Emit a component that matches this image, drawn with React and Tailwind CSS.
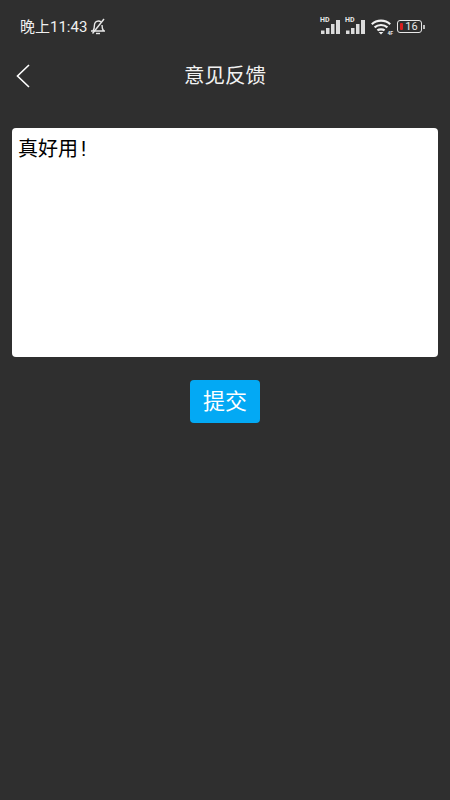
import React from 'react';

function HdSignal() {
  return (
    <div className="relative w-[21px] h-[17px]">
      <span className="absolute left-0 top-[-2px] text-[7px] leading-[8px] font-bold text-[#e8e8e8]">HD</span>
      <svg width="21" height="17" viewBox="0 0 21 17" className="absolute left-0 top-0">
        <rect x="1" y="12.5" width="3.5" height="3.5" fill="#dcdcdc" />
        <rect x="6" y="10" width="3.5" height="6" fill="#dcdcdc" />
        <rect x="11" y="6" width="3.5" height="10" fill="#dcdcdc" />
        <rect x="16" y="2" width="4" height="14" fill="#dcdcdc" />
      </svg>
    </div>
  );
}

function StatusBar() {
  return (
    <div className="h-[52px] flex items-center justify-between pl-[20px] pr-[25px] pt-[1px] text-[#e8e8e8]">
      <div className="flex items-center">
        <span className="text-[15px] leading-[20px] text-[#f0f0f0]">晚上11:43</span>
        <svg width="16" height="17" viewBox="0 0 16 17" fill="none" stroke="#e8e8e8" strokeWidth="1.4" className="ml-[3px]">
          <path d="M1 13h14M3 13c1.2-1.6 1.4-3.2 1.4-5.4C4.4 5 6 3 8.4 3c1 0 1.9.3 2.6 1M12 7c0 2.6.3 4.4 1.6 6" />
          <path d="M2.5 15.5 14 1" />
          <path d="M6 15.5h4" />
        </svg>
      </div>
      <div className="flex items-center">
        <HdSignal />
        <div className="ml-[4px]">
          <HdSignal />
        </div>
        <div className="relative ml-[5px] w-[20px] h-[16px]">
          <svg width="20" height="16" viewBox="0 0 20 16" fill="none" stroke="#f0f0f0" strokeWidth="2.2">
            <path d="M.8 5.2c5-4.8 13.4-4.8 18.4 0" />
            <path d="M3.6 8.4c3.4-3.2 9.4-3.2 12.8 0" />
            <path d="M6.4 11.4c1.8-1.5 5.4-1.5 7.2 0" />
            <path d="M7.6 13 10 15.6 12.4 13z" fill="#f0f0f0" stroke="none" />
          </svg>
          <span className="absolute right-[-2px] bottom-[-1px] text-[5px] leading-[6px] font-bold">4F</span>
        </div>
        <div className="ml-[6px] flex items-center">
          <div className="relative w-[25px] h-[13px] rounded-[3px] border border-[#e8e8e8] flex items-center justify-center">
            <div className="absolute left-[2px] top-[2px] bottom-[2px] w-[3px] bg-[#d81e1e] rounded-[1px]" />
            <span className="text-[11px] leading-none pl-[4px]">16</span>
          </div>
          <div className="w-[2px] h-[4px] bg-[#bdbdbd] ml-[1px]" />
        </div>
      </div>
    </div>
  );
}

function App() {
  return (
    <div
      className="w-[450px] h-[800px] bg-[#2f2f2f] flex flex-col overflow-hidden"
      style={{ fontFamily: '"Roboto", "Noto Sans CJK SC", sans-serif' }}
    >
      <StatusBar />

      {/* 标题栏 */}
      <div className="relative h-[48px] flex items-center justify-center">
        <svg width="16" height="26" viewBox="0 0 16 26" fill="none" stroke="white" strokeWidth="1.6" className="absolute left-[15px] top-[11px]">
          <path d="M14 2 2.5 13 14 24" />
        </svg>
        <h1 className="text-[20.5px] text-[#f2f2f2] font-normal">意见反馈</h1>
      </div>

      <div className="flex flex-col items-center px-[12px] pt-[28px]">
        <div className="w-full h-[229px] bg-white rounded-[4px] px-[6px] py-[6px] text-[20px] leading-[30px] text-black">
          真好用<span className="ml-[3px]">!</span>
        </div>
        <button className="mt-[23px] w-[70px] h-[43px] bg-[#03a9f4] rounded-[4px] text-white text-[22px]">提交</button>
      </div>
    </div>
  );
}

export default App;
